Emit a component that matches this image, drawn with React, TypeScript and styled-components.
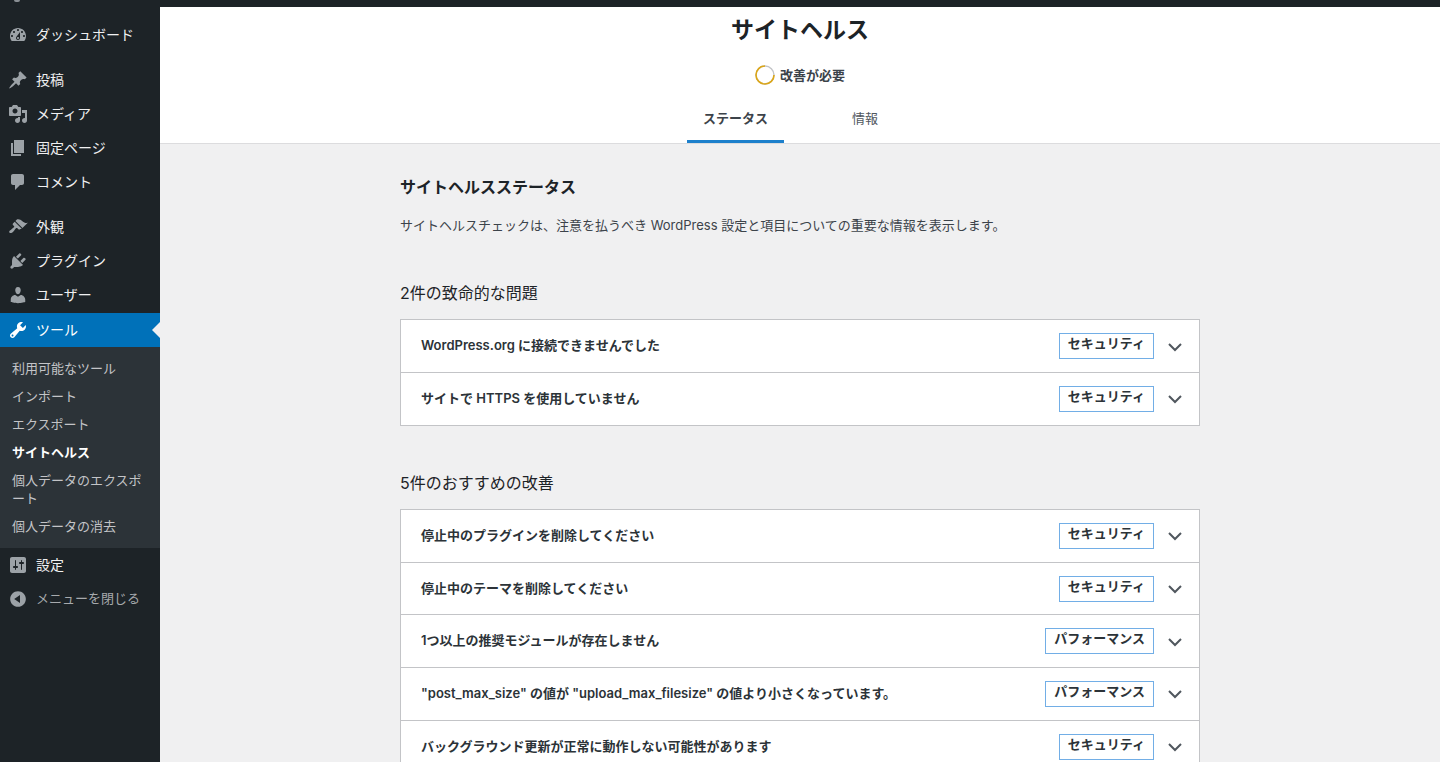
import React from "react";
import styled, { createGlobalStyle } from "styled-components";

const Global = createGlobalStyle`
  html, body { margin: 0; padding: 0; background: #f0f0f1; }
  body {
    height: 762px;
    overflow: hidden;
    font-family: Inter, "Noto Sans CJK JP", sans-serif;
    color: #1d2327;
    -webkit-font-smoothing: antialiased;
  }
  * { box-sizing: border-box; }
`;

const TopBar = styled.div`
  height: 7px;
  background: #1d2327;
`;
const Shell = styled.div`
  display: flex;
  align-items: stretch;
  height: 762px;
`;
const Sidebar = styled.nav`
  flex: 0 0 160px;
  background: #1d2327;
  padding-top: 18px;
  position: relative;
`;
const Sliver = styled.div`
  position: absolute;
  left: 14px;
  top: 0;
  width: 6px;
  height: 2px;
  border-radius: 0 0 3px 3px;
  background: #8a8f94;
`;
const MenuItem = styled.div<{ $active?: boolean; $gap?: number }>`
  position: relative;
  display: flex;
  align-items: center;
  height: 34px;
  margin-bottom: ${(p) => p.$gap ?? 0}px;
  padding: 0 0 2px 8px;
  gap: 8px;
  font-size: 14px;
  color: ${(p) => (p.$active ? "#fff" : "#f0f0f1")};
  background: ${(p) => (p.$active ? "#0071b9" : "transparent")};
  svg { flex: none; margin-top: 2px; fill: ${(p) => (p.$active ? "#fff" : "#9ca2a7")}; }
`;
const ActiveNotch = styled.span`
  position: absolute;
  right: 0;
  top: 9px;
  width: 0;
  height: 0;
  border: 8px solid transparent;
  border-right-color: #f0f0f1;
  border-left-width: 0;
`;
const Submenu = styled.div`
  background: #2c3338;
  padding: 7.3px 0 2.7px;
`;
const SubItem = styled.div<{ $current?: boolean }>`
  padding: 0 12px;
  font-size: 13px;
  line-height: 18px;
  margin: 5px 0 10px;
  color: ${(p) => (p.$current ? "#fff" : "#c3c4c7")};
  font-weight: ${(p) => (p.$current ? 700 : 400)};
`;
const Collapse = styled(MenuItem)`
  color: #a7aaad;
  font-size: 13px;
`;

const Main = styled.main`
  flex: 1;
  min-width: 0;
`;
const Header = styled.header`
  background: #fff;
  border-bottom: 1px solid #dcdcde;
  height: 137px;
  display: flex;
  flex-direction: column;
  align-items: center;
`;
const Title = styled.h1`
  margin: 9px 0 0;
  font-size: 23px;
  line-height: 29px;
  font-weight: 600;
`;
const Status = styled.div`
  display: flex;
  align-items: center;
  gap: 5px;
  margin-top: 19px;
  height: 22px;
  padding-bottom: 2px;
  font-size: 13px;
  font-weight: 600;
  color: #3c434a;
  svg { margin-top: 2px; }
`;
const Tabs = styled.div`
  display: flex;
  margin-top: auto;
  align-self: flex-start;
  margin-left: 527px;
`;
const Tab = styled.div<{ $active?: boolean }>`
  width: ${(p) => (p.$active ? "97px" : "162px")};
  height: 44px;
  display: flex;
  align-items: center;
  justify-content: center;
  padding-bottom: 5px;
  font-size: 13px;
  font-weight: ${(p) => (p.$active ? 600 : 400)};
  color: ${(p) => (p.$active ? "#3c434a" : "#50575e")};
  border-bottom: 3px solid ${(p) => (p.$active ? "#1d80cc" : "transparent")};
`;
const Body = styled.div`
  width: 800px;
  margin: 0 auto;
`;
const SectionTitle = styled.h2`
  margin: 32px 0 0;
  font-size: 16px;
  line-height: 22px;
  font-weight: 600;
`;
const Intro = styled.p`
  margin: 17px 0 0;
  font-size: 13px;
  line-height: 20px;
  color: #3c434a;
`;
const GroupTitle = styled.h3`
  margin: 0 0 14.4px;
  font-size: 16px;
  line-height: 24px;
  font-weight: 400;
`;
const Group = styled.section<{ $top: number }>`
  margin-top: ${(p) => p.$top}px;
`;
const List = styled.div`
  background: #fff;
  border: 1px solid #c3c4c7;
  border-bottom: 0;
`;
const Row = styled.div`
  height: 52.67px;
  display: flex;
  align-items: center;
  padding: 0 17px 0 20px;
  border-bottom: 1px solid #c3c4c7;
`;
const RowTitle = styled.div`
  flex: 1;
  margin-top: -3px;
  font-size: 13px;
  font-weight: 600;
  color: #2c3338;
`;
const Tag = styled.span`
  display: block;
  height: 26px;
  line-height: 19px;
  padding: 0 8px;
  font-size: 13px;
  font-weight: 600;
  color: #2c3338;
  border: 1px solid #72aee6;
  margin-right: 14px;
`;
const Chevron = styled.svg`
  flex: none;
  width: 14px;
  height: 9px;
  margin-top: 2px;
  fill: none;
  stroke: #50575e;
  stroke-width: 2;
`;

type IconName = keyof typeof icons;
const icons = {
  dashboard: "M3.76 16h12.48c1.1-1.37 1.76-3.11 1.76-5 0-4.42-3.58-8-8-8s-8 3.58-8 8c0 1.89.66 3.63 1.76 5zM10 4c.55 0 1 .45 1 1s-.45 1-1 1-1-.45-1-1 .45-1 1-1zM6 6c.55 0 1 .45 1 1s-.45 1-1 1-1-.45-1-1 .45-1 1-1zm8 0c.55 0 1 .45 1 1s-.45 1-1 1-1-.45-1-1 .45-1 1-1zm-5.37 5.55L12 7v6c0 1.1-.9 2-2 2s-2-.9-2-2c0-.57.24-1.08.63-1.45zM4 10c.55 0 1 .45 1 1s-.45 1-1 1-1-.45-1-1 .45-1 1-1zm12 0c.55 0 1 .45 1 1s-.45 1-1 1-1-.45-1-1 .45-1 1-1zm-5 3c0-.55-.45-1-1-1s-1 .45-1 1 .45 1 1 1 1-.45 1-1z",
  pin: "M10.44 3.02l1.82-1.82 6.36 6.35-1.83 1.82c-1.05-.68-2.48-.57-3.41.36l-.75.75c-.92.93-1.04 2.35-.35 3.41l-1.83 1.82-2.41-2.41-2.8 2.79c-.42.42-3.38 2.71-3.8 2.29s1.86-3.39 2.28-3.81l2.79-2.79L4.1 9.36l1.83-1.82c1.05.69 2.48.57 3.4-.36l.75-.75c.93-.92 1.05-2.35.36-3.41z",
  media: "M13 11V4c0-.55-.45-1-1-1h-1.67L9 1H5L3.67 3H2c-.55 0-1 .45-1 1v7c0 .55.45 1 1 1h10c.55 0 1-.45 1-1zM7 4.5c1.38 0 2.5 1.12 2.5 2.5S8.38 9.5 7 9.5 4.5 8.38 4.5 7 5.62 4.5 7 4.5zM14 6h5v10.5c0 1.38-1.12 2.5-2.5 2.5S14 17.88 14 16.5s1.12-2.5 2.5-2.5c.17 0 .34.02.5.05V9h-3V6zm-4 8.05V13h2v3.5c0 1.38-1.12 2.5-2.5 2.5S7 17.88 7 16.5 8.12 14 9.5 14c.17 0 .34.02.5.05z",
  page: "M6 15V2h10v13H6zm-1 1h8v2H3V5h2v11z",
  comment: "M5 2h9c1.1 0 2 .9 2 2v7c0 1.1-.9 2-2 2h-2l-5 5v-5H5c-1.1 0-2-.9-2-2V4c0-1.1.9-2 2-2z",
  appearance: "M14.48 11.06L7.41 3.99l1.5-1.5c.5-.56 2.3-.47 3.51.32 1.21.8 1.43 1.28 2.91 2.1 1.18.64 2.45 1.26 4.45.85zm-.71.71L6.7 4.7 4.93 6.47c-.39.39-.39 1.02 0 1.41l1.06 1.06c.39.39.39 1.03 0 1.42-.6.6-1.43 1.11-2.21 1.69-.35.26-.7.53-1.01.84C1.43 13.23.65 14.8 1.57 15.72s2.49.14 3.84-1.21c.31-.31.58-.66.85-1.01.57-.78 1.08-1.61 1.69-2.21.39-.39 1.02-.39 1.41 0l1.06 1.06c.39.39 1.02.39 1.41 0z",
  plugin: "M13.11 4.36L9.87 7.6 8 5.73l3.24-3.24c.35-.34 1.05-.2 1.56.32.52.51.66 1.21.31 1.55zm-8 1.77l.91-1.12 9.01 9.01-1.19.84c-.71.71-2.63 1.16-3.82 1.16H6.14L4.9 17.26c-.59.59-1.54.59-2.12 0-.59-.58-.59-1.53 0-2.12l1.24-1.24v-3.88c0-1.13.4-3.19 1.09-3.89zm7.26 3.97l3.24-3.24c.34-.35 1.04-.21 1.55.31.52.51.66 1.21.31 1.55l-3.24 3.25z",
  users: "M10 9.25c-2.27 0-2.73-3.44-2.73-3.44C7 4.02 7.82 2 9.97 2c2.16 0 2.98 2.02 2.71 3.81 0 0-.41 3.44-2.68 3.44zm0 2.57L12.72 10c2.39 0 4.52 2.33 4.52 4.53v2.49s-3.65 1.13-7.24 1.13c-3.65 0-7.24-1.13-7.24-1.13v-2.49c0-2.25 1.94-4.48 4.47-4.48z",
  tools: "M16.68 9.77c-1.34 1.34-3.3 1.67-4.95.99l-5.41 6.52c-.99.99-2.59.99-3.58 0s-.99-2.59 0-3.57l6.52-5.42c-.68-1.65-.35-3.61.99-4.95 1.28-1.28 3.12-1.62 4.72-1.06l-2.89 2.89 2.82 2.82 2.86-2.87c.53 1.58.18 3.39-1.08 4.65zM3.81 16.21c.4.39 1.04.39 1.43 0 .4-.4.4-1.04 0-1.43-.39-.4-1.03-.4-1.43 0-.39.39-.39 1.03 0 1.43z",
  settings: "M18 16V4c0-1.1-.9-2-2-2H4c-1.1 0-2 .9-2 2v12c0 1.1.9 2 2 2h12c1.1 0 2-.9 2-2zM8 11h1c.55 0 1 .45 1 1s-.45 1-1 1H8v1.5c0 .28-.22.5-.5.5s-.5-.22-.5-.5V13H6c-.55 0-1-.45-1-1s.45-1 1-1h1V5.5c0-.28.22-.5.5-.5s.5.22.5.5V11zm5-2h-1c-.55 0-1-.45-1-1s.45-1 1-1h1V5.5c0-.28.22-.5.5-.5s.5.22.5.5V7h1c.55 0 1 .45 1 1s-.45 1-1 1h-1v5.5c0 .28-.22.5-.5.5s-.5-.22-.5-.5V9z",
  collapse: "M10 2.16c4.33 0 7.84 3.51 7.84 7.84s-3.51 7.84-7.84 7.84S2.16 14.33 2.16 10 5.71 2.16 10 2.16zm2 11.72V6.12L6.18 9.97z",
};

const Icon = ({ name }: { name: IconName }) => (
  <svg width="20" height="20" viewBox="0 0 20 20" aria-hidden="true">
    <path d={icons[name]} />
  </svg>
);

const Ring = () => (
  <svg width="20" height="20" viewBox="0 0 20 20" aria-hidden="true">
    <circle cx="10" cy="10" r="9" fill="none" stroke="#c3c4c7" strokeWidth="1.4" />
    <path d="M19 10A9 9 0 1 1 10 1" fill="none" stroke="#dba617" strokeWidth="1.6" />
  </svg>
);

const menuTop: { icon: IconName; label: string; gap?: number }[] = [
  { icon: "dashboard", label: "ダッシュボード", gap: 11 },
  { icon: "pin", label: "投稿" },
  { icon: "media", label: "メディア" },
  { icon: "page", label: "固定ページ" },
  { icon: "comment", label: "コメント", gap: 11 },
  { icon: "appearance", label: "外観" },
  { icon: "plugin", label: "プラグイン" },
  { icon: "users", label: "ユーザー", gap: 0.7 },
];

const subItems = ["利用可能なツール", "インポート", "エクスポート", "サイトヘルス", "個人データのエクスポート", "個人データの消去"];

const critical: [string, string][] = [
  ["WordPress.org に接続できませんでした", "セキュリティ"],
  ["サイトで HTTPS を使用していません", "セキュリティ"],
];
const recommended: [string, string][] = [
  ["停止中のプラグインを削除してください", "セキュリティ"],
  ["停止中のテーマを削除してください", "セキュリティ"],
  ["1つ以上の推奨モジュールが存在しません", "パフォーマンス"],
  ['"post_max_size" の値が "upload_max_filesize" の値より小さくなっています。', "パフォーマンス"],
  ["バックグラウンド更新が正常に動作しない可能性があります", "セキュリティ"],
];

const Rows = ({ items }: { items: [string, string][] }) => (
  <List>
    {items.map(([title, tag]) => (
      <Row key={title}>
        <RowTitle>{title}</RowTitle>
        <Tag>{tag}</Tag>
        <Chevron viewBox="0 0 14 9" aria-hidden="true">
          <path d="M1 1l6 6 6-6" />
        </Chevron>
      </Row>
    ))}
  </List>
);

export default function App() {
  return (
    <>
      <Global />
      <Shell>
        <Sidebar>
          <Sliver />
          {menuTop.map((m) => (
            <MenuItem key={m.label} $gap={m.gap}>
              <Icon name={m.icon} />
              {m.label}
            </MenuItem>
          ))}
          <MenuItem $active>
            <Icon name="tools" />
            ツール
            <ActiveNotch />
          </MenuItem>
          <Submenu>
            {subItems.map((s) => (
              <SubItem key={s} $current={s === "サイトヘルス"}>
                {s}
              </SubItem>
            ))}
          </Submenu>
          <MenuItem>
            <Icon name="settings" />
            設定
          </MenuItem>
          <Collapse>
            <Icon name="collapse" />
            メニューを閉じる
          </Collapse>
        </Sidebar>
        <Main>
          <TopBar />
          <Header>
            <Title>サイトヘルス</Title>
            <Status>
              <Ring />
              改善が必要
            </Status>
            <Tabs>
              <Tab $active>ステータス</Tab>
              <Tab>情報</Tab>
            </Tabs>
          </Header>
          <Body>
            <SectionTitle>サイトヘルスステータス</SectionTitle>
            <Intro>サイトヘルスチェックは、注意を払うべき WordPress 設定と項目についての重要な情報を表示します。</Intro>
            <Group $top={46}>
              <GroupTitle>2件の致命的な問題</GroupTitle>
              <Rows items={critical} />
            </Group>
            <Group $top={45}>
              <GroupTitle>5件のおすすめの改善</GroupTitle>
              <Rows items={recommended} />
            </Group>
          </Body>
        </Main>
      </Shell>
    </>
  );
}
